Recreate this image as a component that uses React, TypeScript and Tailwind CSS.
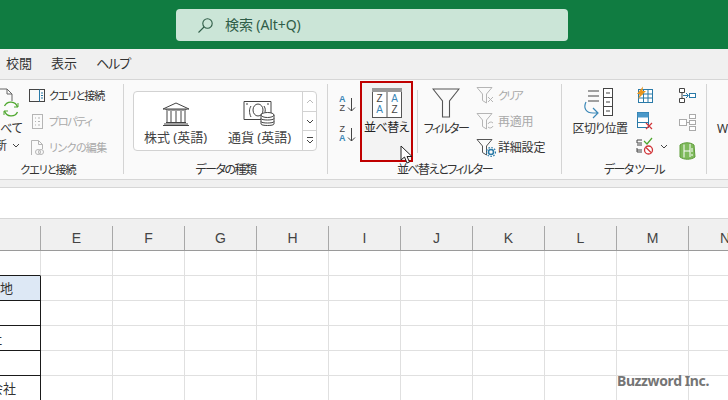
import React from "react";

const font = { fontFamily: '"Noto Sans","Noto Sans CJK JP",sans-serif', fontFeatureSettings: '"palt"' };

function Label({ children, dim, className }: { children: React.ReactNode; dim?: boolean; className?: string }) {
  return <span className={"leading-[16px] whitespace-nowrap " + (dim ? "text-[#a9a9a9] " : "text-[#333] ") + (className ?? "text-[12px]")}>{children}</span>;
}

function Chevron() {
  return <svg width="8" height="5" viewBox="0 0 8 5" className="shrink-0"><path d="M1 1l3 3 3-3" fill="none" stroke="#444" strokeWidth="1" /></svg>;
}

function Funnel({ c = "#8a8a8a", x = false, refresh = false, gear = false }: { c?: string; x?: boolean; refresh?: boolean; gear?: boolean }) {
  return (
    <svg width="20" height="19" viewBox="0 0 20 19">
      <path d="M1 1.500h15l-5.500 6.500v9l-4-2.500v-6.500z" fill="none" stroke={c} strokeWidth="1" />
      {x && <path d="M12 11l5 5M17 11l-5 5" stroke="#b5b5b5" strokeWidth="1" />}
      {refresh && <path d="M12 12a3 3 0 0 1 5-1M17 14a3 3 0 0 1-5 1" fill="none" stroke="#b5b5b5" strokeWidth="1" />}
      {gear && <g><circle cx="15" cy="14" r="2.500" fill="none" stroke="#2a7aa8" strokeWidth="1.500" /><circle cx="15" cy="14" r="4.500" fill="none" stroke="#2a7aa8" strokeWidth="1.200" strokeDasharray="1.500 1.500" /></g>}
    </svg>
  );
}

function SortAZ({ flip }: { flip?: boolean }) {
  const top = flip ? "Z" : "A";
  const bottom = flip ? "A" : "Z";
  return (
    <div className="flex items-center gap-[1px]">
      <div className="flex flex-col items-center text-[9px] leading-[9px]" style={{ fontFamily: '"Liberation Sans",sans-serif' }}>
        <span className={"block " + (top === "A" ? "text-[#3a87b7] font-bold" : "text-[#444]")}>{top}</span>
        <span className={"block " + (bottom === "A" ? "text-[#3a87b7] font-bold" : "text-[#444]")}>{bottom}</span>
      </div>
      <svg width="9" height="15" viewBox="0 0 9 15"><path d="M4.500 1v13M1 10.500l3.500 3.500 3.500-3.500" fill="none" stroke="#444" strokeWidth="1" /></svg>
    </div>
  );
}

function Group({ width, label, labelClass, children }: { width: number; label: string; labelClass?: string; children: React.ReactNode }) {
  return (
    <div className="relative shrink-0 h-[90px] flex flex-col border-r border-[#d4d4d4]" style={{ width }}>
      <div className="flex-1 min-h-0 flex">{children}</div>
      <div className={"h-[16px] -mb-[4px] flex items-center justify-center leading-[16px] text-[#333] whitespace-nowrap " + (labelClass ?? "")}>{label}</div>
    </div>
  );
}

const columns = ["E", "F", "G", "H", "I", "J", "K", "L", "M"];

function Row({ first, selected, text, offset }: { first?: boolean; selected?: boolean; text?: string; offset?: number }) {
  return (
    <div className="flex h-[25px] shrink-0">
      <div className={"w-[41px] shrink-0 overflow-hidden whitespace-nowrap text-[13px] leading-[24px] border-r border-b text-[#333] " + (first ? "border-[#1a1a1a] border-r-[#e0e0e0]" : "border-[#1a1a1a]") + (selected ? " bg-[#dde8f5]" : " bg-white")}>
        {text && <span className="inline-block" style={{ marginLeft: offset }}>{text}</span>}
      </div>
      {columns.map((c) => <div key={c} className="w-[72px] shrink-0 border-r border-b border-[#e0e0e0]" />)}
      <div className="flex-1 border-b border-[#e0e0e0]" />
    </div>
  );
}

export default function App() {
  return (
    <div className="relative w-[728px] h-[400px] overflow-hidden bg-white flex flex-col" style={font}>
      {/* title bar */}
      <div className="h-[49px] shrink-0 bg-[#107c41] flex items-center pl-[176px]">
        <div className="w-[392px] h-[32px] mt-[1px] rounded-[4px] bg-[#cbe5d7] flex items-center pl-[21px] gap-[11px] text-[#2f5d47]">
          <svg width="17" height="17" viewBox="0 0 17 17"><circle cx="10.500" cy="6.500" r="4.700" fill="none" stroke="#2f5d47" strokeWidth="1.100" /><path d="M7 10L1.500 15.500" stroke="#2f5d47" strokeWidth="1.100" /></svg>
          <span className="text-[14px] leading-[18px] -tracking-[0.1px]">検索 (Alt+Q)</span>
        </div>
      </div>
      {/* tabs */}
      <div className="h-[30px] shrink-0 bg-[#f0f0f0] flex items-center pl-[6px] gap-[20px] text-[13px] text-[#333]">
        <span>校閲</span><span className="-ml-[1px]">表示</span><span className="-ml-[1px] tracking-[-1px]">ヘルプ</span>
      </div>
      {/* ribbon */}
      <div className="h-[100px] shrink-0 bg-[#fafafa] border-t border-[#d6d6d6] flex pt-[4px]">
        <Group width={124} label="クエリと接続" labelClass="pr-[27px] text-[11px] tracking-[-1px]">
          <div className="relative w-[29px] shrink-0 overflow-hidden -mb-[4px]">
            <div className="flex flex-col">
              <svg width="20" height="34" viewBox="0 0 20 34">
                <path d="M0 5h7l5 5v7" fill="none" stroke="#666" strokeWidth="1" />
                <path d="M7 5v5h5" fill="none" stroke="#666" strokeWidth="1" />
                <path d="M4.500 22a7 7 0 0 1 13 1M17.500 28a7 7 0 0 1-13 -1" fill="none" stroke="#4ea72e" strokeWidth="1.300" />
                <path d="M18 19v4h-4M4 31v-4h4" fill="none" stroke="#4ea72e" strokeWidth="1" />
              </svg>
              <span className="text-[12px] leading-[17px] mt-[2px] text-[#333] whitespace-nowrap">べて</span>
              <span className="flex items-center gap-[5px] text-[12px] leading-[17px] text-[#333] -ml-[5px]">新<Chevron /></span>
            </div>
          </div>
          <div className="flex flex-col gap-[9px] pt-[3px]">
            <div className="flex items-center gap-[3px] h-[17px]">
              <svg width="17" height="15" viewBox="0 0 17 15"><rect x=".5" y="1.500" width="15" height="12" fill="none" stroke="#444" /><path d="M10.500 1.500v12M12 5h2M12 7.500h2M12 10h2" stroke="#2a7aa8" /></svg>
              <Label className="text-[11px] tracking-[-1px]">クエリと接続</Label>
            </div>
            <div className="flex items-center gap-[3px] h-[17px]">
              <svg width="17" height="17" viewBox="0 0 17 17"><rect x="3.500" y="1.500" width="10" height="14" fill="none" stroke="#b5b5b5" /><path d="M6 5h1M9 5h2M6 8.500h1M9 8.500h2M6 12h1M9 12h2" stroke="#b5b5b5" /></svg>
              <Label dim className="text-[11px] tracking-[-1.300px]">プロパティ</Label>
            </div>
            <div className="flex items-center gap-[3px] h-[17px]">
              <svg width="17" height="17" viewBox="0 0 17 17"><path d="M2.500 16V1.500h7l4 4V10M9.500 1.500v4h4" fill="none" stroke="#b5b5b5" /><circle cx="9" cy="13" r="2.500" fill="none" stroke="#b5b5b5" /><circle cx="12" cy="13" r="2.500" fill="none" stroke="#b5b5b5" /></svg>
              <Label dim className="text-[11px] tracking-[-0.600px]">リンクの編集</Label>
            </div>
          </div>
        </Group>

        <Group width={204} label="データの種類" labelClass="text-[12px] tracking-[-1.500px]">
          <div className="pl-[9px] pt-[7px]">
            <div className="w-[184px] h-[60px] border border-[#d2d2d2] rounded-[4px] bg-white flex">
              <div className="w-[83px] flex flex-col items-center pt-[9px]">
                <svg width="30" height="25" viewBox="0 0 30 25"><path d="M2 8l13-6 13 6zM5 8v1h20V8M3 23h24M2 24.500h26" fill="none" stroke="#444" /><path d="M6 10v12M10 10v12M15 10v12M20 10v12M24 10v12M5 21.500h20" fill="none" stroke="#444" /></svg>
                <span className="text-[13px] leading-[16px] text-[#444] mt-[3px] whitespace-nowrap">株式 (英語)</span>
              </div>
              <div className="flex-1 flex flex-col items-center pt-[9px]">
                <svg width="32" height="25" viewBox="0 0 32 25" className="-ml-[1px]"><path d="M1 .5h27v16M1 .5v18h17" fill="none" stroke="#444" /><path d="M3 3h2M24 3h2" stroke="#444" /><path d="M8 5c-2 3-2 7 0 11M21 5c2 3 1 5 1 6" fill="none" stroke="#444" /><ellipse cx="15" cy="9" rx="5" ry="6" fill="none" stroke="#444" /><g fill="#fff" stroke="#444"><path d="M18 14v9c0 2 13 2 13 0v-9z" /><ellipse cx="24.500" cy="14" rx="6.500" ry="2.500" /><path d="M18 17.500c0 2 13 2 13 0M18 20.500c0 2 13 2 13 0" fill="none" /></g></svg>
                <span className="text-[13px] leading-[16px] text-[#444] mt-[3px] whitespace-nowrap">通貨 (英語)</span>
              </div>
              <div className="w-[14px] shrink-0 border-l border-[#d2d2d2] flex flex-col">
                <div className="h-[20px] border-b border-[#d2d2d2] flex items-center justify-center"><svg width="8" height="5" viewBox="0 0 8 5"><path d="M1 4l3-3 3 3" fill="none" stroke="#bbb" /></svg></div>
                <div className="h-[19px] border-b border-[#d2d2d2] flex items-center justify-center"><Chevron /></div>
                <div className="flex-1 flex items-center justify-center"><svg width="8" height="7" viewBox="0 0 8 7"><path d="M1 .500h6M1 3l3 3 3-3" fill="none" stroke="#444" /></svg></div>
              </div>
            </div>
          </div>
        </Group>

        <Group width={234} label="並べ替えとフィルター" labelClass="text-[12px] tracking-[-1.500px]">
          <div className="w-[32px] shrink-0 flex flex-col items-start pl-[11px] pt-[11px] gap-[12px]">
            <SortAZ />
            <SortAZ flip />
          </div>
          <div className="relative w-[53px] h-[81px] -mt-[3px] shrink-0 border-2 border-[#c00000] bg-[#f3f3f3] flex flex-col items-center pt-[5px]">
            <svg width="30" height="30" viewBox="0 0 30 30">
              <rect x=".5" y=".5" width="29" height="29" fill="#fff" stroke="#555" />
              <rect x="0" y="0" width="30" height="4" fill="#999" />
              <path d="M15 4v26" stroke="#555" />
              <g fontFamily="Liberation Sans" fontSize="10" textAnchor="middle">
                <text x="7.500" y="14" fill="#444">Z</text><text x="7.500" y="25" fill="#3a87b7">A</text>
                <text x="22.500" y="14" fill="#3a87b7">A</text><text x="22.500" y="25" fill="#444">Z</text>
              </g>
            </svg>
            <span className="text-[12px] leading-[16px] text-[#222] mt-[2px] whitespace-nowrap tracking-[-0.500px]">並べ替え</span>
          </div>
          <div className="w-[1px] h-[63px] mt-[6px] ml-[4px] shrink-0 bg-[#d4d4d4]" />
          <div className="w-[53px] shrink-0 flex flex-col items-center pt-[4px] pl-[3px]">
            <svg width="28" height="30" viewBox="0 0 28 30"><path d="M1 1h26L17.500 13v16h-7V13z" fill="none" stroke="#555" strokeWidth="1.100" /></svg>
            <span className="text-[12px] leading-[16px] mt-[3px] text-[#333] whitespace-nowrap tracking-[-1.600px]">フィルター</span>
          </div>
          <div className="flex flex-col pt-[2px] pl-[5px] gap-[7px]">
            <div className="flex items-center gap-[2px] h-[19px]"><Funnel c="#b5b5b5" x /><Label dim className="text-[11px] tracking-[-1.700px]">クリア</Label></div>
            <div className="flex items-center gap-[2px] h-[19px]"><Funnel c="#b5b5b5" refresh /><Label dim className="text-[12px] tracking-[-0.300px]">再適用</Label></div>
            <div className="flex items-center gap-[2px] h-[19px]"><Funnel c="#555" gear /><Label className="text-[12px] tracking-[-0.200px]">詳細設定</Label></div>
          </div>
        </Group>

        <Group width={145} label="データ ツール" labelClass="text-[12px] tracking-[-1.500px]">
          <div className="w-[74px] shrink-0 flex flex-col items-center pt-[4px] pl-[2px]">
            <svg width="34" height="31" viewBox="0 0 34 31">
              <path d="M5 3h11M5 8h11M5 13h11" stroke="#444" />
              <rect x="20.500" y=".5" width="9" height="27" fill="#fff" stroke="#444" />
              <path d="M20.500 9.500h9M20.500 18.500h9M23 5h4M23 14h4M23 23h4" stroke="#444" />
              <path d="M3 14c-3 6 0 11 7 11h4M10 20l5 5-5 5" fill="none" stroke="#3a87b7" strokeWidth="1.200" />
            </svg>
            <span className="text-[12px] leading-[16px] mt-[2px] text-[#333] whitespace-nowrap tracking-[-0.600px]">区切り位置</span>
          </div>
          <div className="w-[43px] shrink-0 flex flex-col pt-[2px] gap-[7px]">
            <svg width="18" height="18" viewBox="0 0 18 18"><rect x="2.500" y="3.500" width="14" height="13" fill="#fff" stroke="#2a7aa8" /><path d="M2.500 8h14M2.500 12h14M7.500 3.500v13M12 3.500v13" stroke="#2a7aa8" /><path d="M7 .5L1 8h3l-2 5 8-8H6.500z" fill="#e8951f" /></svg>
            <svg width="18" height="19" viewBox="0 0 18 19"><rect x="1.500" y="1.500" width="11" height="15" fill="#fff" stroke="#2a7aa8" /><rect x="1.500" y="1.500" width="11" height="5" fill="#4a98c9" /><path d="M1.500 11.500h11" stroke="#2a7aa8" /><path d="M10 12l6 6M16 12l-6 6" stroke="#d13438" strokeWidth="1.200" /></svg>
            <div className="flex items-center gap-[5px]">
              <svg width="19" height="18" viewBox="0 0 19 18"><path d="M1 3h5M1 8h5M1 13h5M1 3v3h5M1 11v4h5" fill="none" stroke="#444" /><path d="M8 4l3 3 5-6" fill="none" stroke="#4ea72e" strokeWidth="1.200" /><circle cx="12.500" cy="13" r="4" fill="#fff" stroke="#d13438" strokeWidth="1.300" /><path d="M10 10.500l5 5" stroke="#d13438" strokeWidth="1.300" /></svg>
              <Chevron />
            </div>
          </div>
          <div className="flex-1 flex flex-col pt-[4px] gap-[11px]">
            <svg width="17" height="15" viewBox="0 0 17 15"><path d="M.5.5h5v4h-5zM.5 10.500h5v4h-5zM3 4.500v6" fill="#fff" stroke="#444" /><path d="M4 7.500h5M7 5l2.500 2.500L7 10" fill="none" stroke="#2a7aa8" /><rect x="10.500" y="5.500" width="6" height="4" fill="#fff" stroke="#2a7aa8" /></svg>
            <svg width="17" height="17" viewBox="0 0 17 17"><g fill="#fff" stroke="#aaa"><rect x=".5" y="5.500" width="7" height="6" /><rect x="10.500" y=".5" width="6" height="4" /><rect x="10.500" y="6.500" width="6" height="4" /><rect x="10.500" y="12.500" width="6" height="4" /></g><path d="M7.500 8.500h3" stroke="#aaa" /></svg>
            <svg width="18" height="18" viewBox="0 0 18 18" className="-ml-[1px]"><path d="M2 3c4-3 10-3 14 0l1 12c-4 3-11 3-15 0z" fill="#7fba5c" stroke="#5e9c3a" /><path d="M6 2.500v13M12 2v13M6 9h6" stroke="#fff" /><path d="M14 6v4M14 12v2" stroke="#fff" /></svg>
          </div>
        </Group>

        <div className="pl-[10px] pt-[37px] text-[12px] leading-[16px] text-[#333]">W</div>
      </div>
      {/* strip under ribbon */}
      <div className="h-[9px] shrink-0 bg-[#f0f0f0] border-t border-b border-[#d6d6d6]" />
      {/* formula bar */}
      <div className="h-[31px] shrink-0 bg-white border-b border-[#d6d6d6]" />
      {/* headers */}
      <div className="flex h-[32px] shrink-0 bg-[#f0f0f0] pt-[7px] border-b border-[#9a9a9a]" style={{ fontFamily: '"Liberation Sans",sans-serif' }}>
        <div className="w-[41px] shrink-0 border-r border-[#a8a8a8]" />
        {columns.map((c) => <div key={c} className="w-[72px] shrink-0 border-r border-[#a8a8a8] flex items-center justify-center text-[14px] text-[#444]">{c}</div>)}
        <div className="flex-1 pl-[31px] flex items-center text-[14px] text-[#444] whitespace-nowrap">N</div>
      </div>
      {/* grid */}
      <Row first />
      <Row selected text="地" offset={0} />
      <Row />
      <Row text="社" offset={-11} />
      <Row />
      <Row text="会社" offset={-10} />

      {/* mouse cursor */}
      <svg width="16" height="20" viewBox="0 0 16 20" className="absolute left-[400px] top-[145px]"><path d="M1 1v14l3.500-3 2.500 6 2.500-1-2.500-5.500H12z" fill="#fff" stroke="#222" /></svg>
      {/* watermark */}
      <div className="absolute left-[617px] top-[371px] text-[14px] leading-[20px] font-bold text-[#757575] tracking-[-0.4px] whitespace-nowrap" style={{ fontFamily: '"Noto Sans",sans-serif' }}>Buzzword Inc.</div>
    </div>
  );
}
